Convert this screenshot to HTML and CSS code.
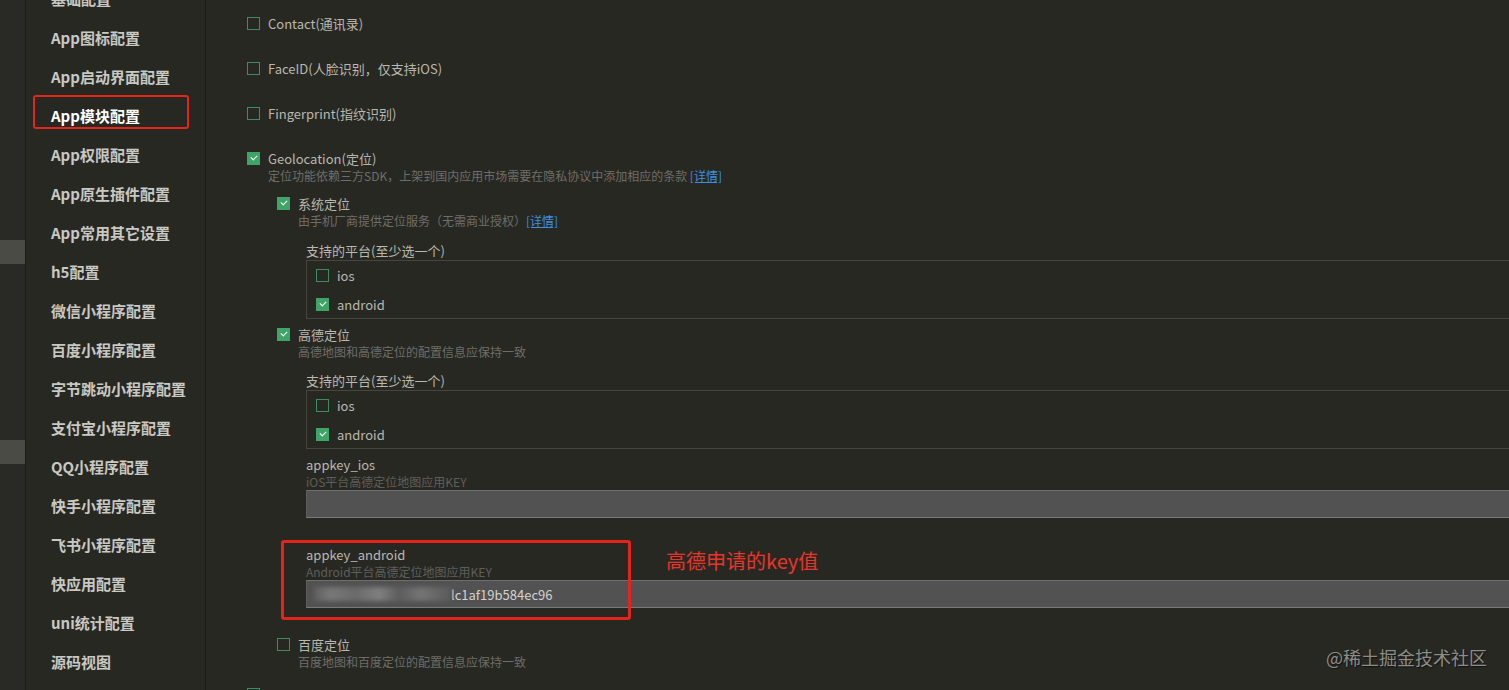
FILE: index.html
```html
<!DOCTYPE html>
<html lang="zh-CN">

<head>
    <meta charset="UTF-8">
    <meta name="viewport" content="width=device-width, initial-scale=1.0">
    <title>manifest.json - App模块配置</title>
    <link rel="stylesheet" href="styles.css">
</head>

<body>
    <div class="app">
        <div class="rail">
            <div class="rail-block first"></div>
            <div class="rail-block second"></div>
        </div>

        <nav class="sidebar">
            <ul class="nav-list">
                <li>基础配置</li>
                <li>App图标配置</li>
                <li>App启动界面配置</li>
                <li class="active">App模块配置</li>
                <li>App权限配置</li>
                <li>App原生插件配置</li>
                <li>App常用其它设置</li>
                <li>h5配置</li>
                <li>微信小程序配置</li>
                <li>百度小程序配置</li>
                <li>字节跳动小程序配置</li>
                <li>支付宝小程序配置</li>
                <li>QQ小程序配置</li>
                <li>快手小程序配置</li>
                <li>飞书小程序配置</li>
                <li>快应用配置</li>
                <li>uni统计配置</li>
                <li>源码视图</li>
            </ul>
            <div class="nav-mark"></div>
        </nav>

        <main class="main">
            <div class="opt top"><span class="cb"></span><span>Contact(通讯录)</span></div>
            <div class="opt top"><span class="cb"></span><span>FaceID(人脸识别，仅支持iOS)</span></div>
            <div class="opt top"><span class="cb"></span><span>Fingerprint(指纹识别)</span></div>

            <div class="group">
                <div class="opt"><span class="cb on"></span><span>Geolocation(定位)</span></div>
                <div class="desc">定位功能依赖三方SDK，上架到国内应用市场需要在隐私协议中添加相应的条款 <a href="#">[详情]</a></div>

                <div class="sub">
                    <div class="opt"><span class="cb on"></span><span>系统定位</span></div>
                    <div class="desc">由手机厂商提供定位服务（无需商业授权）<a href="#">[详情]</a></div>
                    <div class="field wide">
                        <div class="field-label">支持的平台(至少选一个)</div>
                        <div class="platforms">
                            <div class="opt"><span class="cb"></span><span>ios</span></div>
                            <div class="opt"><span class="cb on"></span><span>android</span></div>
                        </div>
                    </div>

                    <div class="opt gap-sm"><span class="cb on"></span><span>高德定位</span></div>
                    <div class="desc">高德地图和高德定位的配置信息应保持一致</div>
                    <div class="field">
                        <div class="field-label">支持的平台(至少选一个)</div>
                        <div class="platforms">
                            <div class="opt"><span class="cb"></span><span>ios</span></div>
                            <div class="opt"><span class="cb on"></span><span>android</span></div>
                        </div>
                    </div>
                    <div class="field near">
                        <div class="field-label">appkey_ios</div>
                        <div class="field-desc">iOS平台高德定位地图应用KEY</div>
                        <div class="input"></div>
                    </div>
                    <div class="field far">
                        <div class="field-label">appkey_android</div>
                        <div class="field-desc">Android平台高德定位地图应用KEY</div>
                        <div class="input"><span class="blur"></span>lc1af19b584ec96</div>
                    </div>

                    <div class="opt gap-lg"><span class="cb"></span><span>百度定位</span></div>
                    <div class="desc">百度地图和百度定位的配置信息应保持一致</div>
                </div>
            </div>

            <div class="opt last"><span class="cb"></span></div>

            <div class="key-mark"></div>
            <div class="key-note">高德申请的key值</div>
        </main>

        <div class="watermark">@稀土掘金技术社区</div>
    </div>
</body>

</html>
```

FILE: styles.css
```css
body {
    margin: 0;
    background: #282823;
    font-family: "Noto Sans CJK SC", "Noto Sans", sans-serif;
    color: #b8b8b0;
    overflow: hidden;
}

.app {
    position: relative;
    display: flex;
    width: 1509px;
    height: 690px;
    overflow: hidden;
}

/* left strip */
.rail {
    width: 25px;
    flex-shrink: 0;
    background: #292925;
    border-right: 1px solid #1c1c19;
}

.rail-block {
    height: 24px;
    background: #4b4b46;
}

.rail-block.first {
    margin-top: 240px;
}

.rail-block.second {
    margin-top: 176px;
}

/* settings menu */
.sidebar {
    position: relative;
    width: 179px;
    flex-shrink: 0;
    background: #282823;
    border-right: 1px solid #1c1c19;
}

.nav-list {
    list-style: none;
    margin: -21px 0 0;
    padding: 0 0 0 25px;
}

.nav-list li {
    height: 39px;
    line-height: 39px;
    font-size: 15px;
    font-weight: bold;
    color: #c9c9c3;
    white-space: nowrap;
}

.nav-list li.active {
    color: #ffffff;
}

.nav-mark {
    position: absolute;
    left: 7px;
    top: 95px;
    width: 152px;
    height: 30px;
    border: 2px solid #e3251e;
    border-radius: 3px;
}

/* form */
.main {
    position: relative;
    flex: 1;
    padding: 13px 0 0 41px;
    font-size: 13px;
}

.opt {
    display: flex;
    align-items: center;
    gap: 8px;
    height: 20px;
    white-space: nowrap;
}

.opt.top {
    margin-bottom: 25px;
}

.opt.gap-sm {
    margin-top: 5px;
}

.opt.gap-lg {
    margin-top: 26px;
}

.opt.last {
    margin-top: 14px;
}

.cb {
    width: 13px;
    height: 13px;
    box-sizing: border-box;
    border: 1px solid #3f8c63;
    flex-shrink: 0;
    position: relative;
}

.cb.on {
    background: #3ea468;
    border-color: #3ea468;
}

.cb.on::after {
    content: "";
    position: absolute;
    left: 3px;
    top: 2px;
    width: 5px;
    height: 3px;
    border-left: 1.5px solid #ffffff;
    border-bottom: 1.5px solid #ffffff;
    transform: rotate(-45deg);
}

.desc {
    padding-left: 21px;
    font-size: 12px;
    line-height: 16px;
    color: #6e6e68;
    white-space: nowrap;
}

.desc a {
    color: #3d8fe0;
    text-decoration: underline;
}

.group > .desc {
    margin-bottom: 9px;
}

.sub {
    padding-left: 30px;
}

.field {
    margin: 10px 0 0 29px;
}

.field.wide {
    margin-top: 11px;
}

.field.near {
    margin-top: 5px;
}

.field.far {
    margin-top: 26px;
}

.field-label {
    height: 20px;
    line-height: 22px;
    color: #b8b8b0;
}

.field-desc {
    font-size: 12px;
    line-height: 16px;
    color: #5f5f5a;
}

.platforms {
    display: flex;
    flex-direction: column;
    gap: 9px;
    padding: 4px 9px;
    border: 1px solid #46463f;
    border-right: none;
}

.input {
    height: 28px;
    box-sizing: border-box;
    background: #525252;
    border-top: 1px solid #6e6e6e;
    border-bottom: 1px solid #7a7a7a;
    border-left: 1px solid #5e5e5e;
    padding-left: 7px;
    display: flex;
    align-items: center;
    color: #d2d2d2;
    font-size: 13px;
}

.blur {
    width: 137px;
    height: 14px;
    background: linear-gradient(90deg, #5e5e5e 0, #787878 12%, #6a6a6a 30%, #7f7f7f 48%, #5c5c5c 62%, #747474 78%, #5a5a5a 100%);
    filter: blur(2px);
}

.key-mark {
    position: absolute;
    left: 75px;
    top: 540px;
    width: 344px;
    height: 74px;
    border: 3px solid #e3251e;
    border-radius: 3px;
}

.key-note {
    position: absolute;
    left: 460px;
    top: 547px;
    font-size: 20px;
    line-height: 28px;
    color: #e8352a;
    white-space: nowrap;
}

.watermark {
    position: absolute;
    right: 22px;
    top: 644px;
    font-size: 18px;
    line-height: 26px;
    color: #8d8d88;
    text-shadow: 1px 1px 1px #111110;
}
```
